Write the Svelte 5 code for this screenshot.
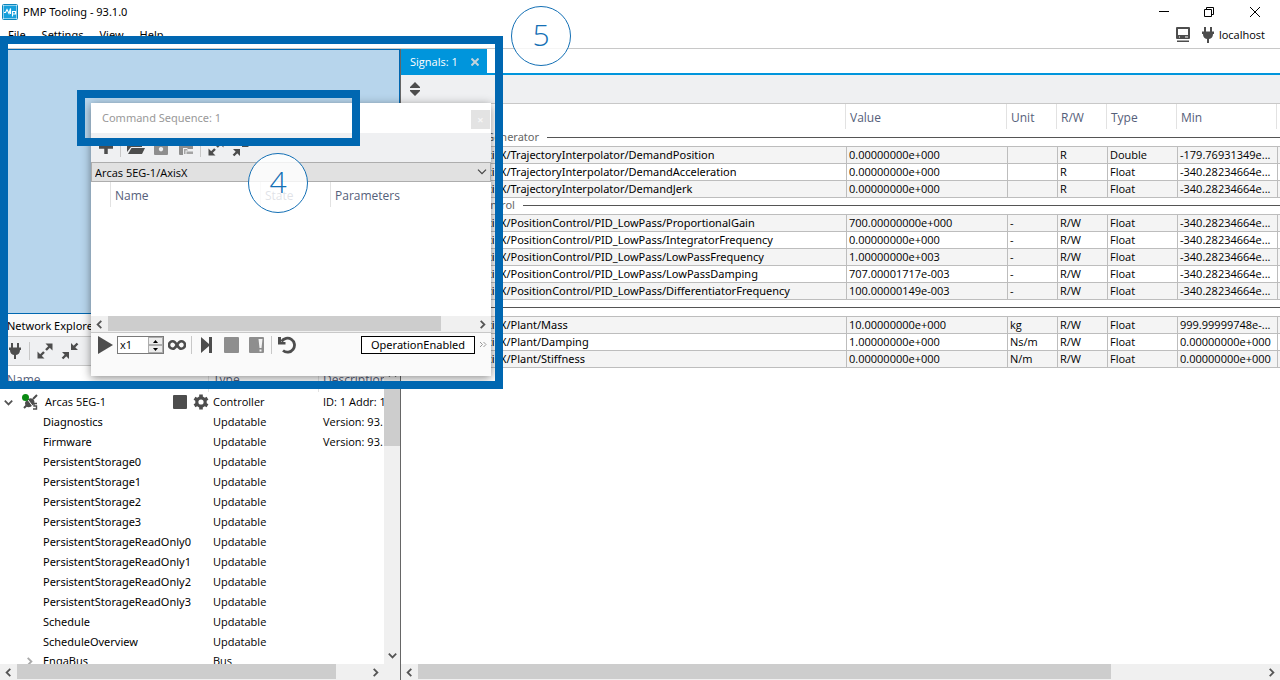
<script>
  const menus = ['File', 'Settings', 'View', 'Help'];

  const tree = [
    'Diagnostics', 'Firmware',
    'PersistentStorage0', 'PersistentStorage1', 'PersistentStorage2', 'PersistentStorage3',
    'PersistentStorageReadOnly0', 'PersistentStorageReadOnly1',
    'PersistentStorageReadOnly2', 'PersistentStorageReadOnly3',
    'Schedule', 'ScheduleOverview'
  ].map((name, i) => ({ name, type: 'Updatable', info: i < 2 ? 'Version: 93.' : '' }));

  const low = '-340.28234664e...';
  const traj = 'AxisX/TrajectoryInterpolator/';
  const pid = 'AxisX/PositionControl/PID_LowPass/';
  const groups = [
    {
      title: 'TrajectoryGenerator',
      rows: [
        [traj + 'DemandPosition', '0.00000000e+000', '', 'R', 'Double', '-179.76931349e...'],
        [traj + 'DemandAcceleration', '0.00000000e+000', '', 'R', 'Float', low],
        [traj + 'DemandJerk', '0.00000000e+000', '', 'R', 'Float', low]
      ]
    },
    {
      title: 'PositionControl',
      rows: [
        [pid + 'ProportionalGain', '700.00000000e+000', '-', 'R/W', 'Float', low],
        [pid + 'IntegratorFrequency', '0.00000000e+000', '-', 'R/W', 'Float', low],
        [pid + 'LowPassFrequency', '1.00000000e+003', '-', 'R/W', 'Float', low],
        [pid + 'LowPassDamping', '707.00001717e-003', '-', 'R/W', 'Float', low],
        [pid + 'DifferentiatorFrequency', '100.00000149e-003', '-', 'R/W', 'Float', low]
      ]
    },
    {
      title: 'Plant',
      rows: [
        ['AxisX/Plant/Mass', '10.00000000e+000', 'kg', 'R/W', 'Float', '999.99999748e-...'],
        ['AxisX/Plant/Damping', '1.00000000e+000', 'Ns/m', 'R/W', 'Float', '0.00000000e+000'],
        ['AxisX/Plant/Stiffness', '0.00000000e+000', 'N/m', 'R/W', 'Float', '0.00000000e+000']
      ]
    }
  ];

  let repeat = $state('x1');
</script>

{#snippet chevron(dir)}
  <svg width="9" height="9" viewBox="0 0 9 9" class="chev {dir}"><path d="M6.3 .8 2.6 4.5l3.7 3.7" fill="none" stroke="#555" stroke-width="1.8" /></svg>
{/snippet}

{#snippet plug()}
  <svg width="18" height="18" viewBox="0 0 18 18" fill="#4d4d4d"><path d="M5 1h2v4.500H5zM11 1h2v4.500h-2zM3 5.500h12v2.500h-1c0 3-1.500 4.500-4 5V17H8v-4c-2.500-.5-4-2-4-5H3z" /></svg>
{/snippet}

{#snippet expand()}
  <svg width="18" height="18" viewBox="0 0 18 18"><path d="M9.500 1.500h7v7zM1.500 9.500v7h7z" fill="#4d4d4d" /><path d="m10 8 4-4M8 10l-4 4" stroke="#4d4d4d" stroke-width="2.400" /></svg>
{/snippet}

{#snippet collapse()}
  <svg width="18" height="18" viewBox="0 0 18 18"><path d="M10 1v7h7zM1 10h7v7z" fill="#4d4d4d" /><path d="m12 6 4.500-4.500M6 12l-4.500 4.500" stroke="#4d4d4d" stroke-width="2.400" /></svg>
{/snippet}

{#snippet hscroll(name, size)}
  <div class="hscroll">
    <button aria-label="{name} left">{@render chevron('left')}</button>
    <div class="track"><div class="thumb" style:width="{size}%"></div></div>
    <button aria-label="{name} right">{@render chevron('right')}</button>
  </div>
{/snippet}

<div class="app">
  <header class="titlebar">
    <svg width="16" height="16" viewBox="0 0 16 16">
      <rect x=".5" y=".5" width="15" height="15" rx="1" fill="#fff" stroke="#0b86bd" />
      <rect x="1.500" y="1.500" width="13" height="13" fill="#16a0dc" />
      <path d="M2 8.500h1.500l1.500-3 2 4 1.500-5V10M10.500 12.500V7.500H13.500v2.500h-3" fill="none" stroke="#fff" stroke-width="1.100" />
    </svg>
    <h1>PMP Tooling - 93.1.0</h1>
    <button aria-label="Minimize"><svg width="10" height="10" viewBox="0 0 10 10"><path d="M0 4.500h10" stroke="#000" /></svg></button>
    <button aria-label="Restore"><svg width="10" height="10" viewBox="0 0 10 10"><path d="M.5 2.500h7v7h-7zM2.500 2.500v-2h7v7h-2" fill="none" stroke="#000" /></svg></button>
    <button aria-label="Close"><svg width="10" height="10" viewBox="0 0 10 10"><path d="m0 0 10 10M10 0 0 10" stroke="#000" /></svg></button>
  </header>

  <nav class="menubar">
    {#each menus as m}<button>{m}</button>{/each}
    <div class="host">
      <svg width="16" height="18" viewBox="0 0 16 18"><path fill-rule="evenodd" d="M2 1h12q1 0 1 1v10q0 1-1 1H2q-1 0-1-1V2q0-1 1-1zm1 2v6h10V3zm1 7.500v1h1v-1zm6 0v1h3v-1zM2 14.500h12V16H2z" fill="#4d4d4d" /></svg>
      {@render plug()}
      <span>localhost</span>
    </div>
  </nav>

  <main>
    <aside>
      <div class="canvas"></div>
      <section class="explorer">
        <h2>Network Explorer</h2>
        <div class="tools">
          <button aria-label="Connect">{@render plug()}</button>
          <i></i>
          <button aria-label="Expand all">{@render expand()}</button>
          <button aria-label="Collapse all">{@render collapse()}</button>
        </div>
        <div class="treebox">
          <div class="treeview">
            <table>
              <colgroup><col class="c-name" /><col class="c-type" /><col /></colgroup>
              <thead><tr><th>Name</th><th>Type</th><th>Description</th></tr></thead>
              <tbody>
                <tr>
                  <td>
                    <div class="node">
                      {@render chevron('down')}
                      <svg width="18" height="18" viewBox="0 0 18 18">
                        <path d="m3 15 3-3M12 6l4-4" stroke="#4d4d4d" stroke-width="2" />
                        <path d="M5 8q3-4 7-2 3 3 0 6-4 4-7 1-2-3 0-5z" fill="#4d4d4d" />
                        <path d="m7 7 6 8" stroke="#fff" />
                        <path d="M16 10.500h-3v2.500h2.500v3h-3.500" fill="none" stroke="#4d4d4d" stroke-width="1.400" />
                        <circle cx="4.500" cy="4.500" r="3.500" fill="#0a8a12" />
                      </svg>
                      <span>Arcas 5EG-1</span>
                      <svg width="14" height="14" viewBox="0 0 14 14"><rect width="14" height="14" rx="1" fill="#4d4d4d" /></svg>
                      <svg width="16" height="16" viewBox="0 0 16 16">
                        <circle cx="8" cy="8" r="4.200" fill="none" stroke="#4d4d4d" stroke-width="3.200" />
                        <path d="M8 .5v3M8 12.500v3M1.500 4.250l2.600 1.500M11.900 10.250l2.600 1.500M1.500 11.750l2.600-1.500M11.900 5.750l2.600-1.500" stroke="#4d4d4d" stroke-width="3.600" />
                      </svg>
                    </div>
                  </td>
                  <td>Controller</td>
                  <td>ID: 1 Addr: 1</td>
                </tr>
                {#each tree as t}
                  <tr><td class="child">{t.name}</td><td>{t.type}</td><td>{t.info}</td></tr>
                {/each}
                <tr><td class="child"><span class="twist">{@render chevron('right')}</span>EngaBus</td><td>Bus</td><td></td></tr>
              </tbody>
            </table>
          </div>
          <div class="vscroll">
            <button aria-label="Scroll up">{@render chevron('up')}</button>
            <div class="vtrack"><div class="vthumb"></div></div>
            <button aria-label="Scroll down">{@render chevron('down')}</button>
          </div>
        </div>
        <div class="corner">{@render hscroll('Explorer', 91)}</div>
      </section>
    </aside>

    <section class="signals">
      <div class="tabs">
        <div class="tab"><span>Signals: 1</span><button aria-label="Close tab"><svg width="8" height="8" viewBox="0 0 8 8"><path d="m.5.5 7 7M7.500.5l-7 7" stroke="#c3d3dc" stroke-width="2" /></svg></button></div>
      </div>
      <div class="sigtools"><button aria-label="Sort"><svg width="12" height="14" viewBox="0 0 12 14"><path d="M6 0l5 5v1H1V5zM6 14l5-5V8H1v1z" fill="#4d4d4d" /></svg></button></div>
      <div class="gridbox">
        <table>
          <colgroup><col /><col class="w-value" /><col class="w-small" /><col class="w-small" /><col class="w-type" /><col class="w-min" /><col class="w-end" /></colgroup>
          <thead><tr><th></th><th>Value</th><th>Unit</th><th>R/W</th><th>Type</th><th>Min</th><th></th></tr></thead>
          {#each groups as g}
            <tbody>
              <tr class="group"><td colspan="7"><div><span>{g.title}</span><hr /></div></td></tr>
              {#each g.rows as r}
                <tr class="data">{#each r as c}<td>{c}</td>{/each}<td></td></tr>
              {/each}
            </tbody>
          {/each}
        </table>
      </div>
      {@render hscroll('Signals', 82)}
    </section>
  </main>

  <section class="window">
    <div class="wtitle"><h2>Command Sequence: 1</h2><button aria-label="Close window">×</button></div>
    <div class="wtools">
      <button aria-label="Add"><svg width="16" height="16" viewBox="0 0 16 16"><path d="M8 0v14M1 7h14" stroke="#4d4d4d" stroke-width="3.500" /></svg></button>
      <i></i>
      <button aria-label="Open"><svg width="18" height="16" viewBox="0 0 18 16"><path d="M0 12V3h6l1 2h8v2H4zM4.500 8H18l-3 6H1z" fill="#4d4d4d" /></svg></button>
      <button aria-label="Save"><svg width="16" height="16" viewBox="0 0 16 16"><path fill-rule="evenodd" d="M1 0h11l3 3v11q0 1-1 1H2q-1 0-1-1zm2 2v3h8V2zm5 5a2.200 2.200 0 1 0 .01 0z" fill="#8e8e8e" /></svg></button>
      <button aria-label="Save as"><svg width="16" height="16" viewBox="0 0 16 16"><path d="M1 0h11l3 3v12H2q-1 0-1-1z" fill="#8e8e8e" /><path d="M3 2h8v3H3zM5 15V8h4l1 1h6v6z" fill="#eff0f2" /><path d="M6 14V9h3l1 1.500h-2.500V14zM8.500 11.500H15V14H8.500z" fill="#a4a4a4" /></svg></button>
      <i></i>
      <button aria-label="Expand">{@render expand()}</button>
      <button aria-label="Collapse">{@render collapse()}</button>
    </div>
    <div class="combo">
      <select aria-label="Axis"><option>Arcas 5EG-1/AxisX</option></select>
      <svg width="10" height="6" viewBox="0 0 10 6"><path d="m1 .7 4 4 4-4" fill="none" stroke="#444" stroke-width="1.200" /></svg>
    </div>
    <div class="wlist">
      <table>
        <colgroup><col class="l-mark" /><col class="l-name" /><col class="l-state" /><col /></colgroup>
        <thead><tr><th></th><th>Name</th><th>State</th><th>Parameters</th></tr></thead>
      </table>
    </div>
    {@render hscroll('Sequence', 91)}
    <div class="wplay">
      <button aria-label="Play"><svg width="16" height="18" viewBox="0 0 16 18"><path d="M1 0 16 9 1 18z" fill="#4d4d4d" /></svg></button>
      <div class="spin">
        <input type="text" aria-label="Repeat count" bind:value={repeat} />
        <div>
          <button aria-label="Increase"><svg width="5" height="3" viewBox="0 0 5 3"><path d="M0 3 2.500 0 5 3z" /></svg></button>
          <button aria-label="Decrease"><svg width="5" height="3" viewBox="0 0 5 3"><path d="M0 0l2.500 3L5 0z" /></svg></button>
        </div>
      </div>
      <button aria-label="Loop"><svg width="18" height="12" viewBox="0 0 18 12"><path d="M9 6C7.500 3.500 6.500 2.200 4.800 2.200a3.600 3.600 0 0 0 0 7.600C6.500 9.800 7.500 8.500 9 6s2.500-3.800 4.200-3.800a3.600 3.600 0 0 1 0 7.600C11.500 9.800 10.500 8.500 9 6z" fill="none" stroke="#4d4d4d" stroke-width="2.600" /></svg></button>
      <i></i>
      <button aria-label="Step"><svg width="12" height="16" viewBox="0 0 12 16"><path d="m0 0 8 7V0h3v16H8V9l-8 7z" fill="#4d4d4d" /></svg></button>
      <button aria-label="Stop"><svg width="16" height="16" viewBox="0 0 16 16"><rect width="15" height="16" rx="1" fill="#8e8e8e" /></svg></button>
      <button aria-label="Stop on error"><svg width="16" height="16" viewBox="0 0 16 16"><rect width="15" height="16" rx="1" fill="#8e8e8e" /><path d="M9.500 2h4l-1 9h-2zM10.500 12.500h2v2h-2z" fill="#f4f4f4" /></svg></button>
      <i></i>
      <button aria-label="Reset"><svg width="18" height="18" viewBox="0 0 18 18"><path d="M3.500 5.500A7 7 0 1 1 5 14.500" fill="none" stroke="#4d4d4d" stroke-width="2.800" /><path d="M0 1v7.500h7.500V6H3V1z" fill="#4d4d4d" /></svg></button>
      <output>OperationEnabled</output>
      <button class="more" aria-label="More"><svg width="8" height="8" viewBox="0 0 8 8"><path d="m1 1 2.500 2.500L1 6M4.500 1 7 3.500 4.500 6" fill="none" stroke="#999" /></svg></button>
    </div>
  </section>

  <div class="frame large"></div>
  <div class="frame small"></div>
  <div class="badge four">4</div>
  <div class="badge five">5</div>
</div>

<style>
  :global(body) { margin: 0; overflow: hidden; }
  .app {
    position: relative; display: flex; flex-direction: column; height: 100vh; overflow: hidden;
    background: #fff; color: #000; font: 11px/16px "Open Sans", "Noto Sans", sans-serif;
  }
  .app * { box-sizing: border-box; }
  button { display: flex; align-items: center; justify-content: center; padding: 0; border: 0; background: none; font: inherit; color: inherit; }
  svg { flex: none; display: block; }
  h1, h2 { margin: 0; font: inherit; white-space: nowrap; }
  h1, h2, .menubar > button, .child, .gridbox td:first-child, output { font-family: "Noto Sans", "Open Sans", sans-serif; }
  table { width: 100%; table-layout: fixed; border-collapse: separate; border-spacing: 0; }
  th, td { padding: 0 0 0 4px; overflow: hidden; white-space: nowrap; text-align: left; font-weight: 400; }
  th { padding-top: 2px; font-size: 12px; color: #55607a; border-right: 1px solid #e2e2e2; }
  th:last-child { border-right: 0; }

  .chev.right { transform: rotate(180deg); }
  .chev.up { transform: rotate(90deg); }
  .chev.down { transform: rotate(-90deg); }

  .titlebar { flex: none; display: flex; align-items: center; height: 24px; padding: 0 2px; }
  .titlebar h1 { flex: 1; padding-left: 5px; }
  .titlebar button { width: 46px; height: 20px; }
  .titlebar button:first-of-type { width: 44px; }
  .menubar { flex: none; display: flex; align-items: center; height: 25px; padding: 0 15px 2px 0; border-bottom: 1px solid #c8c8c8; }
  .menubar > button { padding: 0 8px; }
  .host { display: flex; align-items: center; gap: 8px; margin-left: auto; }
  .host span { margin-left: -6px; }

  main { flex: 1; display: flex; min-height: 0; }
  aside { flex: none; display: flex; flex-direction: column; width: 400px; min-height: 0; }
  .canvas { flex: none; height: 265px; background: #b7d5ec; border: 1px solid #0067b1; }
  .explorer { flex: 1; display: flex; flex-direction: column; min-height: 0; background: #f9f9fa; }
  .explorer h2 { flex: none; height: 22px; padding-left: 7px; line-height: 24px; }
  .tools { flex: none; display: flex; align-items: center; height: 30px; background: #eff0f2; border: 1px solid #c8c8c8; border-width: 1px 0; padding-left: 2px; }
  .tools button { width: 25px; }
  i { width: 1px; height: 18px; margin: 0 2px; background: #c8c8c8; }
  .treebox { flex: 1; display: flex; min-height: 0; background: #fff; }
  .treeview { flex: 1; overflow: hidden; }
  .c-name { width: 209px; }
  .c-type { width: 110px; }
  .treeview th { height: 26px; }
  .treeview th:first-child { padding-left: 7px; }
  .treeview td { height: 20px; }
  .treeview td.child { padding-left: 43px; }
  .node { display: flex; align-items: center; gap: 6px; }
  .node .chev { margin-right: 2px; }
  .node span { flex: 1; }
  .twist { float: left; margin: 4px 0 0 -18px; opacity: .5; }

  .vscroll { flex: none; display: flex; flex-direction: column; width: 16px; background: #f0f0f0; }
  .vscroll button { height: 17px; }
  .vtrack { flex: 1; }
  .vthumb { height: 24%; background: #cdcdcd; }
  .hscroll { flex: none; display: flex; height: 16px; background: #f0f0f0; }
  .hscroll button { width: 17px; }
  .track { flex: 1; }
  .thumb { height: 15px; background: #cdcdcd; }
  .corner { padding-right: 16px; background: #f0f0f0; }

  .signals { flex: 1; display: flex; flex-direction: column; min-width: 0; border-left: 1px solid #666; }
  .tabs { flex: none; display: flex; height: 26px; border-bottom: 2px solid #0095dc; }
  .tab { display: flex; align-items: center; justify-content: space-between; width: 86px; padding: 2px 8px 0 9px; background: #0095dc; color: #fff; }
  .sigtools { flex: none; display: flex; align-items: center; height: 29px; padding: 0 8px; background: #eff0f2; border-bottom: 1px solid #c8c8c8; }
  .gridbox { flex: 1; min-height: 0; overflow: hidden; }
  .w-value { width: 161px; }
  .w-small { width: 50px; }
  .w-type { width: 70px; }
  .w-min { width: 100px; }
  .w-end { width: 3px; }
  .gridbox th { height: 25px; }
  .gridbox td { height: 17px; padding-left: 2px; line-height: 16px; border-left: 1px solid #bdbdbd; border-top: 1px solid #bdbdbd; }
  .gridbox td:first-child { padding-left: 78px; border-left: 0; }
  .gridbox td:last-child { padding: 0; }
  .gridbox tr.group td { padding: 0 0 0 34px; color: #666; vertical-align: top; }
  .gridbox tbody:nth-of-type(1) .group td { border-top-color: transparent; }
  .group div { display: flex; align-items: center; gap: 8px; height: 14px; line-height: 14px; }
  .group hr { flex: 1; height: 1px; margin: 0; border: 0; background: #555; }
  .data:nth-child(even) { background: #f4f4f4; }
  tbody:last-child tr:last-child td { height: 18px; border-bottom: 1px solid #bdbdbd; }

  .window {
    position: absolute; left: 91px; top: 103px; width: 400px; height: 273px;
    display: flex; flex-direction: column; background: #fff; box-shadow: 0 2px 9px rgba(0, 0, 0, .45);
  }
  .wtitle { flex: none; display: flex; align-items: center; justify-content: space-between; height: 30px; padding: 0 1px 0 11px; color: #999; }
  .wtitle button { width: 19px; height: 19px; margin-top: 3px; background: #e3e3e3; color: #f6f6f6; font-weight: 700; }
  .wtools { flex: none; display: flex; align-items: center; height: 29px; padding-left: 2px; background: #eff0f2; }
  .wtools button { width: 25px; }
  .combo { position: relative; flex: none; height: 20px; }
  select { display: block; width: 100%; height: 20px; padding: 2px 3px 0; appearance: none; border: 1px solid #adadad; border-radius: 0; background: #e1e1e1; color: #000; font: inherit; }
  .combo svg { position: absolute; right: 4px; top: 7px; }
  .wlist { flex: 1; }
  .wlist th { height: 25px; }
  .l-mark { width: 20px; }
  .l-name { width: 150px; }
  .l-state { width: 70px; }
  .wplay { flex: none; display: flex; align-items: center; height: 44px; padding: 0 1px 19px; border-top: 1px solid #c8c8c8; background: #fafafa; }
  .wplay > button { width: 25px; }
  .wplay i { margin: 0 2px; }
  .spin { display: flex; width: 47px; height: 18px; border: 1px solid #7a7a7a; background: #fff; }
  .spin input { flex: 1; min-width: 0; padding: 0 2px; border: 0; background: none; font: inherit; }
  .spin div { display: flex; flex-direction: column; width: 15px; }
  .spin button { flex: 1; border: 1px solid #adadad; background: #ececec; }
  output { width: 114px; height: 18px; margin-left: auto; border: 1px solid #000; background: #fff; text-align: center; }
  .wplay .more { width: 15px; }

  .frame { position: absolute; border: 8px solid #0067b1; pointer-events: none; }
  .large { left: 0; top: 36px; width: 503px; height: 353px; }
  .small { left: 77px; top: 90px; width: 283px; height: 56px; }
  .badge {
    position: absolute; width: 60px; height: 60px; border: 1px solid #1470b5; border-radius: 50%;
    background: rgba(255, 255, 255, .82); color: #1470b5; font-size: 30px; font-weight: 300; line-height: 56px; text-align: center;
  }
  .four { left: 248px; top: 153px; }
  .five { left: 511px; top: 6px; }
</style>
